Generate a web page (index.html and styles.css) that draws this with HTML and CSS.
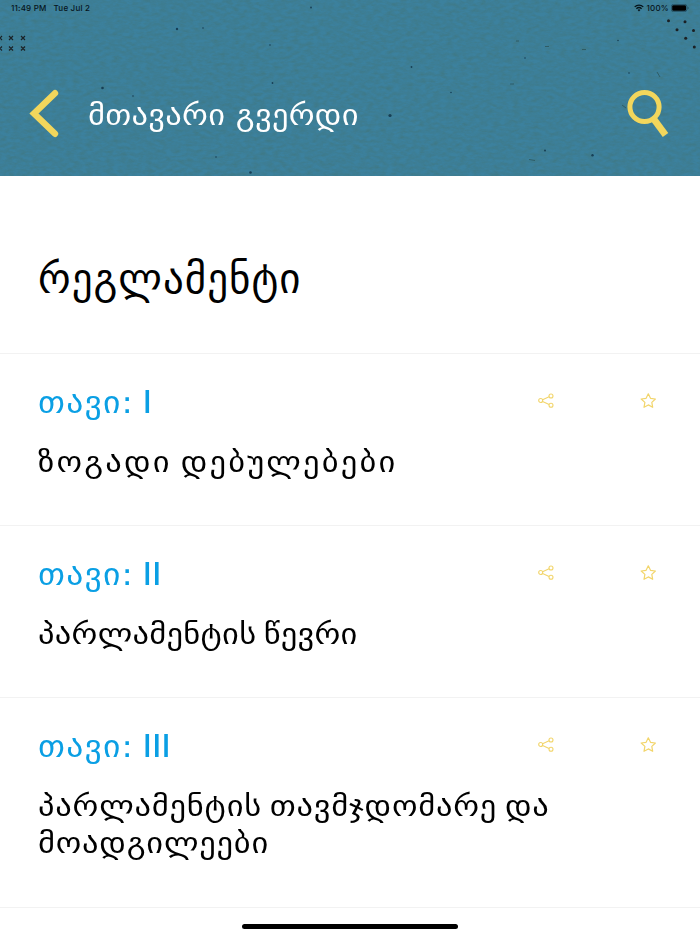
FILE: index.html
```html
<!DOCTYPE html>
<html lang="ka">
<head>
  <meta charset="UTF-8" />
  <meta name="viewport" content="width=device-width, initial-scale=1.0" />
  <title>რეგლამენტი</title>
  <link rel="stylesheet" href="styles.css">
</head>
<body>
  <header class="header">
    <!-- paper texture -->
    <svg class="texture" width="700" height="176" viewBox="0 0 700 176" aria-hidden="true">
      <filter id="grain" x="0" y="0" width="100%" height="100%" color-interpolation-filters="sRGB">
        <feTurbulence type="fractalNoise" baseFrequency="0.15 0.3" numOctaves="4" seed="12" />
        <feColorMatrix values="0 0 0 0 0.26  0 0 0 0 0.44  0 0 0 0 0.42  1 1 0 0 -0.7" />
      </filter>
      <rect width="700" height="176" filter="url(#grain)" opacity=".5" />
      <g fill="#173f55">
        <circle cx="390" cy="115.500" r="1.600" />
        <circle cx="102.500" cy="88" r="1.300" />
        <circle cx="250.500" cy="172.500" r="1.300" />
        <circle cx="592.500" cy="155.300" r="1.200" />
        <circle cx="545" cy="150.500" r="1" />
        <circle cx="133" cy="96" r=".8" />
        <circle cx="272.500" cy="83" r=".9" />
        <circle cx="311" cy="7.500" r=".9" />
        <circle cx="216" cy="157" r=".8" />
        <circle cx="177" cy="29" r="1.200" />
        <circle cx="203" cy="28" r=".8" />
        <circle cx="270" cy="45" r=".8" />
        <circle cx="411.500" cy="67" r=".9" />
        <circle cx="451" cy="92.500" r=".8" />
        <circle cx="525" cy="58" r=".8" />
        <circle cx="618" cy="40.500" r=".8" />
        <circle cx="629" cy="73" r=".8" />
      </g>
      <g stroke="#294f50" stroke-width="1" fill="none" opacity=".7">
        <path d="M529 159.500l6 1M545 46.500h4M582 49.500h4M510 84h4M516 41h3M657 72l3 5M622 105l4 3" />
      </g>
      <path d="M-2 36l4 4m0-4l-4 4M9 36l4 4m0-4l-4 4M21 36l4 4m0-4l-4 4M-2 46.500l4 4m0-4l-4 4M9 46.500l4 4m0-4l-4 4M21 46.500l4 4m0-4l-4 4" stroke="#1b2226" stroke-width="1.200" fill="none" />
      <g fill="#1b2024">
        <circle cx="668.500" cy="20.800" r="1.500" />
        <circle cx="685" cy="21.700" r="1.500" />
        <circle cx="677" cy="29.700" r="1.500" />
        <circle cx="693.500" cy="30.500" r="1.500" />
        <circle cx="685.700" cy="38.300" r="1.500" />
        <circle cx="694.300" cy="47" r="1.500" />
      </g>
    </svg>

    <div class="status">
      <span>11:49 PM</span>
      <span class="date">Tue Jul 2</span>
      <svg class="wifi" width="10" height="8" viewBox="0 0 10 8">
        <path d="M.7 2.900a6.200 6.200 0 0 1 8.600 0M2.400 4.700a3.800 3.800 0 0 1 5.200 0" fill="none" stroke="#06141b" stroke-width="1.300" />
        <path d="M5 7.500L3.600 6a2 2 0 0 1 2.800 0z" fill="#06141b" />
      </svg>
      <span class="percent">100%</span>
      <svg width="18" height="8" viewBox="0 0 18 8">
        <rect x=".4" y=".4" width="15.400" height="7.200" rx="2" fill="none" stroke="#234d60" stroke-width=".8" />
        <rect x="1.200" y="1.200" width="13.800" height="5.600" rx="1.200" fill="#000" />
        <path d="M16.600 2.800q1 .3 1 1.200t-1 1.200z" fill="#234d60" />
      </svg>
    </div>

    <div class="bar">
      <svg class="back" width="30" height="50" viewBox="0 0 30 50">
        <path d="M26 5.200L5 25.500 26 45.800" fill="none" stroke="#f2d65c" stroke-width="6.400" stroke-linecap="round" />
      </svg>
      <span class="bar-title">მთავარი გვერდი</span>
      <svg class="search" width="42" height="50" viewBox="0 0 42 50">
        <circle cx="17.500" cy="19" r="14.600" fill="none" stroke="#f2d65c" stroke-width="5" />
        <path d="M26 30l12.500 17" stroke="#f2d65c" stroke-width="6.800" />
      </svg>
    </div>
  </header>

  <main>
    <h1 class="title">რეგლამენტი</h1>

    <section class="chapter">
      <div class="chapter-head">
        <h2>თავი: <span class="num">I</span></h2>
        <svg class="share" width="16" height="16" viewBox="0 0 16 16"><use href="#share" /></svg>
        <svg class="star" width="16" height="16" viewBox="0 0 16 16"><use href="#star" /></svg>
      </div>
      <p class="wide">ზოგადი დებულებები</p>
    </section>

    <section class="chapter">
      <div class="chapter-head">
        <h2>თავი: <span class="num">II</span></h2>
        <svg class="share" width="16" height="16" viewBox="0 0 16 16"><use href="#share" /></svg>
        <svg class="star" width="16" height="16" viewBox="0 0 16 16"><use href="#star" /></svg>
      </div>
      <p class="narrow">პარლამენტის წევრი</p>
    </section>

    <section class="chapter">
      <div class="chapter-head">
        <h2>თავი: <span class="num">III</span></h2>
        <svg class="share" width="16" height="16" viewBox="0 0 16 16"><use href="#share" /></svg>
        <svg class="star" width="16" height="16" viewBox="0 0 16 16"><use href="#star" /></svg>
      </div>
      <p>პარლამენტის თავმჯდომარე და<br>მოადგილეები</p>
    </section>
  </main>

  <div class="home-indicator"></div>

  <svg width="0" height="0" class="defs">
    <symbol id="share" viewBox="0 0 16 16">
      <g fill="none" stroke="#f2d56b" stroke-width="1.100">
        <circle cx="2.700" cy="7.500" r="2" />
        <circle cx="13" cy="3" r="2" />
        <circle cx="13" cy="12.200" r="2" />
        <path d="M4.600 6.700l6.500-2.900M4.600 8.400l6.500 3" />
      </g>
    </symbol>
    <symbol id="star" viewBox="0 0 16 16">
      <path d="M8.300.8l2.200 4.500 4.900.7-3.600 3.400.9 4.900-4.400-2.400L4 14.300l.9-4.900L1.200 6l4.900-.7z" fill="none" stroke="#f2d56b" stroke-width="1.200" stroke-linejoin="round" />
    </symbol>
  </svg>
</body>
</html>
```
FILE: styles.css
```css
* {
  box-sizing: border-box;
}
body {
  margin: 0;
  height: 934px;
  overflow: hidden;
  background: #fff;
  color: #000;
  font-family: "DejaVu Sans", sans-serif;
}
.header {
  position: relative;
  height: 176px;
  background: #3c819e;
}
.texture {
  position: absolute;
  top: 0;
  left: 0;
}
.status {
  position: relative;
  display: flex;
  align-items: center;
  height: 17px;
  padding: 0 11px 1px 11px;
  font-family: Inter, sans-serif;
  font-size: 8px;
  font-weight: 500;
  letter-spacing: .2px;
  line-height: 16px;
  color: #06141b;
}
.date {
  margin-left: 7px;
}
.wifi {
  margin-left: auto;
}
.percent {
  margin: 0 2px 0 3px;
}
.bar {
  position: relative;
  display: flex;
  align-items: center;
  margin-top: 71px;
  height: 50px;
  padding: 0 31px 0 29px;
}
/* the Georgian letters are drawn a bit wider than the font has them */
.bar-title,
h2,
.chapter p {
  transform: scaleX(1.12);
  transform-origin: left;
  white-space: nowrap;
}
.bar-title {
  margin: 3px 0 0 29px;
  color: #fff;
  font-size: 29px;
  letter-spacing: .25px;
}
.search {
  margin-left: auto;
}
.title {
  margin: 0;
  height: 177px;
  padding: 75px 38px 0;
  font-size: 41px;
  font-weight: normal;
  letter-spacing: 1px;
  line-height: 56px;
}
.chapter {
  min-height: 172px;
  padding: 28px 44px 34px 38px;
  border-top: 1px solid #f2f2f2;
}
.chapter:last-child {
  min-height: 211px;
  border-bottom: 1px solid #f2f2f2;
}
.chapter-head {
  display: flex;
  align-items: center;
  height: 38px;
}
h2 {
  margin: 0;
  color: #0a9fe4;
  font-size: 30px;
  font-weight: normal;
  letter-spacing: 1.1px;
  word-spacing: -3.500px;
}
.num {
  font-family: "Liberation Sans", sans-serif;
  font-size: 34px;
  letter-spacing: -1.1px;
}
.share {
  margin-left: auto;
}
.star {
  margin-left: 86px;
}
.chapter p {
  margin: 24px 0 0;
  font-size: 29px;
  letter-spacing: .7px;
  word-spacing: -3px;
  line-height: 37px;
}
.chapter .wide {
  letter-spacing: 1.95px;
}
.chapter .narrow {
  letter-spacing: .25px;
}
.home-indicator {
  position: fixed;
  left: 242px;
  bottom: 5px;
  width: 216px;
  height: 5px;
  border-radius: 3px;
  background: #000;
}
.defs {
  position: absolute;
}
```
